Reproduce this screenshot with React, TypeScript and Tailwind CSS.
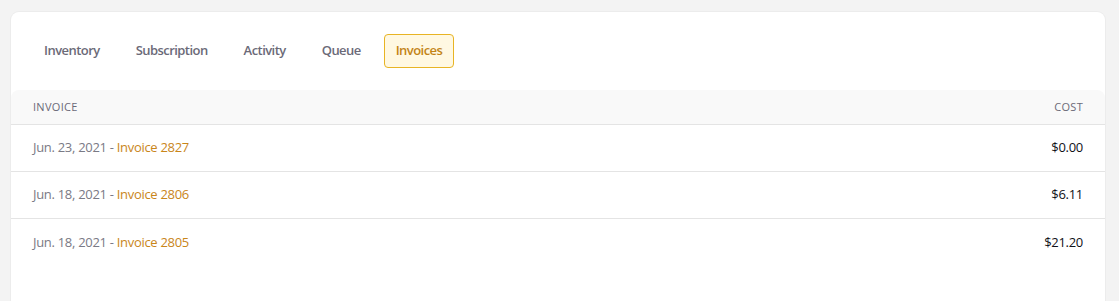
import React from 'react';

const tabs = ['Inventory', 'Subscription', 'Activity', 'Queue', 'Invoices'];

const invoices = [
  { date: 'Jun. 23, 2021', label: 'Invoice 2827', cost: '$0.00' },
  { date: 'Jun. 18, 2021', label: 'Invoice 2806', cost: '$6.11' },
  { date: 'Jun. 18, 2021', label: 'Invoice 2805', cost: '$21.20' },
];

export default function App() {
  const active = 'Invoices';
  return (
    <div
      className="min-h-[301px] bg-[#f3f3f3] pt-3 pl-[11px] pr-[14px]"
      style={{ fontFamily: '"Open Sans", "Noto Sans", sans-serif' }}
    >
      <div className="bg-white rounded-lg h-[300px] shadow-[0_0_0_1px_#ececec]">
        {/* Tabs */}
        <div className="flex items-center gap-[10px] pl-[20px] pt-[22px] pb-[22px]">
          {tabs.map((t) => (
            <button
              key={t}
              className={
                t === active
                  ? 'h-[34px] px-[11px] rounded-[4px] border border-[#e8b424] bg-[#fff8e2] text-[#c38417] text-[13px] font-semibold tracking-[-0.55px]'
                  : 'h-[34px] px-3 rounded-[4px] border border-transparent text-[#6b6a78] text-[13px] font-semibold tracking-[-0.55px]'
              }
            >
              {t}
            </button>
          ))}
        </div>

        {/* Table header */}
        <div className="flex items-center justify-between h-[35px] px-[22px] bg-[#f9f9f9] rounded-t-lg border-b border-[#e4e4e4] text-[11px] text-[#6b6a78] uppercase tracking-[0.3px]">
          <span>Invoice</span>
          <span>Cost</span>
        </div>

        {/* Rows */}
        {invoices.map((inv, i) => (
          <div
            key={inv.label}
            className={
              'flex items-center justify-between h-[47px] px-[22px] text-[13px] tracking-[-0.3px] ' +
              (i < invoices.length - 1 ? 'border-b border-[#e4e4e4]' : '')
            }
          >
            <span className="text-[#7a7a85]">
              {inv.date} - <span className="text-[#c9861a] font-medium">{inv.label}</span>
            </span>
            <span className="text-[#111118] font-medium">{inv.cost}</span>
          </div>
        ))}
      </div>
    </div>
  );
}
